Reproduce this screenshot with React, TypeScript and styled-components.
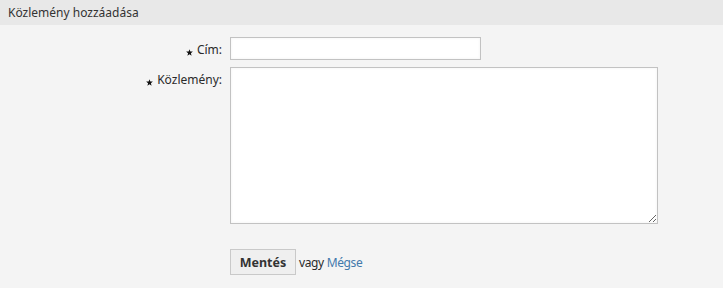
import React from "react";
import styled, { createGlobalStyle } from "styled-components";

const Global = createGlobalStyle`
  html, body { margin: 0; padding: 0; background: #f4f4f4; }
  body { font-family: "Noto Sans", "Open Sans", sans-serif; font-size: 12px; color: #333; }
  * { box-sizing: border-box; }
`;

const Widget = styled.div`
  width: 723px;
  height: 288px;
  background: #f4f4f4;
`;

const Header = styled.div`
  height: 25px;
  background: #e8e8e8;
  padding: 0 8px;
  display: flex;
  align-items: center;
  font-size: 12px;
  color: #333;
`;

const Form = styled.div`
  display: grid;
  grid-template-columns: 222px 1fr;
  column-gap: 8px;
  row-gap: 7px;
  padding-top: 12px;
`;

const Label = styled.label`
  display: flex;
  justify-content: flex-end;
  align-items: baseline;
  padding-top: 4px;
  font-size: 12px;
  color: #2a2a2a;
  white-space: nowrap;
`;

const StarIcon = styled.svg`
  width: 7px;
  height: 7px;
  margin-right: 4px;
  align-self: flex-start;
  margin-top: 8px;
  flex: none;
`;

const Input = styled.input`
  width: 251px;
  height: 23px;
  border: 1px solid #c2c2c2;
  background: #fff;
  box-shadow: inset 0 0 3px rgba(0,0,0,0.06);
  outline: none;
  margin: 0;
`;

const TextArea = styled.textarea`
  width: 428px;
  height: 157px;
  border: 1px solid #c2c2c2;
  background: #fff;
  box-shadow: inset 0 0 3px rgba(0,0,0,0.06);
  outline: none;
  margin: 0;
  display: block;
  font-family: inherit;
`;

const Actions = styled.div`
  grid-column: 2;
  display: flex;
  align-items: center;
  margin-top: 18px;
  font-size: 12px;
  letter-spacing: -0.4px;
  color: #2a2a2a;
`;

const Button = styled.button`
  height: 26px;
  width: 66px;
  padding: 0;
  border: 1px solid #c9c9c9;
  background: #efefef;
  font-family: inherit;
  font-size: 12.5px;
  font-weight: 700;
  letter-spacing: 0;
  color: #333;
  margin-right: 3px;
`;

const Or = styled.span`
  margin-right: 3px;
`;

const Link = styled.a`
  color: #4279ab;
  text-decoration: none;
`;

const Star = () => (
  <StarIcon viewBox="0 0 10 10">
    <path
      d="M5 0.3 L6.2 3.6 L9.8 3.7 L7 5.9 L8 9.5 L5 7.4 L2 9.5 L3 5.9 L0.2 3.7 L3.8 3.6 Z"
      fill="#111"
    />
  </StarIcon>
);

export default function App() {
  return (
    <Widget>
      <Global />
      <Header>Közlemény hozzáadása</Header>
      <Form>
        <Label><Star />Cím:</Label>
        <div><Input /></div>
        <Label><Star />Közlemény:</Label>
        <div><TextArea /></div>
        <Actions>
          <Button>Mentés</Button>
          <Or>vagy</Or>
          <Link href="#">Mégse</Link>
        </Actions>
      </Form>
    </Widget>
  );
}
